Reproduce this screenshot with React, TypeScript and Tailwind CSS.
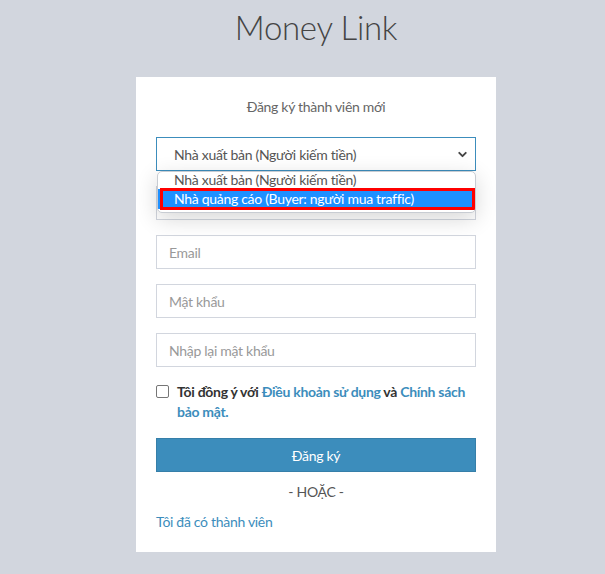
import { ChevronDown } from 'lucide-react';

const font = { fontFamily: '"Lato", "Liberation Sans", sans-serif' };

function Field({ placeholder, type = 'text' }: { placeholder: string; type?: string }) {
  return (
    <input
      type={type}
      placeholder={placeholder}
      className="block w-full h-[34px] px-3 text-[14px] tracking-[-0.3px] text-[#555] bg-white border border-[#d2d6de] outline-none placeholder:text-[#999]"
    />
  );
}

export default function App() {
  return (
    <div className="min-h-[574px] w-full bg-[#d2d6de] pt-[7px] pl-[27px] tracking-[-0.3px]" style={font}>
      {/* Logo */}
      <h1 className="text-center text-[33px] leading-[40px] font-light text-[#444] mb-[30px]">Money Link</h1>

      {/* Card */}
      <div className="mx-auto w-[360px] bg-white p-5 text-[14px] text-[#666]">
        <p className="text-center leading-5 mb-5">Đăng ký thành viên mới</p>

        <div className="relative mb-[15px]">
          <div className="flex items-center justify-between h-[34px] pl-[17px] pr-[6px] border border-[#3c8dbc] text-[#555]">
            <span>Nhà xuất bản (Người kiếm tiền)</span>
            <ChevronDown size={13} strokeWidth={3.5} className="text-[#444]" />
          </div>

          {/* Open options list */}
          <div className="absolute z-10 left-[1px] right-0 top-[34px] h-[42px] bg-white border border-[#c8ccd2] rounded-[5px] shadow-[0_6px_22px_rgba(0,0,0,0.16)] overflow-hidden">
            <div className="h-[17px] pl-4 leading-[15px] text-[#555]">Nhà xuất bản (Người kiếm tiền)</div>
            <div className="relative h-[20px] pl-4 leading-[20px] bg-[#1e90ff] text-white">
              Nhà quảng cáo (Buyer: người mua traffic)
              <div className="absolute -top-[1px] left-[2px] right-0 -bottom-[1px] border-[3px] border-[#ff0000]" />
            </div>
          </div>
        </div>

        <div className="mb-[15px]">
          <Field placeholder="Họ và tên" />
        </div>
        <div className="mb-[15px]">
          <Field placeholder="Email" type="email" />
        </div>
        <div className="mb-[15px]">
          <Field placeholder="Mật khẩu" type="password" />
        </div>
        <div className="mb-[15px]">
          <Field placeholder="Nhập lại mật khẩu" type="password" />
        </div>

        <label className="flex items-start gap-2 mb-4 leading-[20px] font-bold text-[#333]">
          <span className="mt-[3px] shrink-0 w-[13px] h-[13px] border border-[#767676] rounded-[2px] bg-white" />
          <span className="flex flex-col">
            <span>
              Tôi đồng ý với <a className="text-[#3c8dbc]">Điều khoản sử dụng</a> và{' '}
              <a className="text-[#3c8dbc]">Chính sách</a>
            </span>
            <a className="text-[#3c8dbc]">bảo mật.</a>
          </span>
        </label>

        <button className="block w-full h-[34px] bg-[#3c8dbc] border border-[#367fa9] text-white text-[14px]">
          Đăng ký
        </button>

        <p className="text-center leading-5 mt-[10px] text-[#555]">- HOẶC -</p>
        <a className="block leading-5 mt-[10px] text-[#3c8dbc]">Tôi đã có thành viên</a>
      </div>
    </div>
  );
}
